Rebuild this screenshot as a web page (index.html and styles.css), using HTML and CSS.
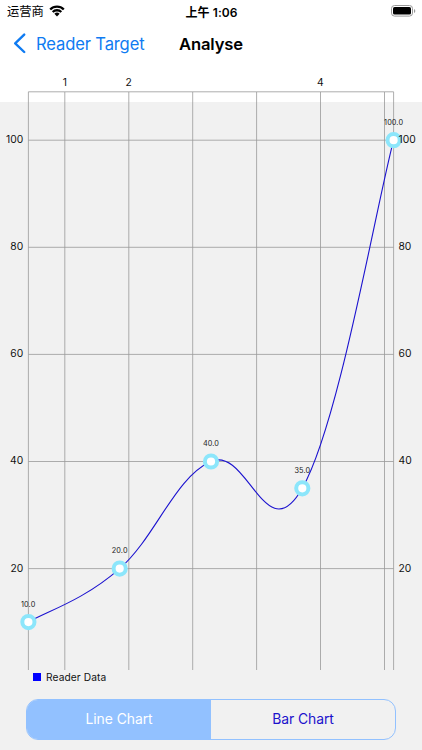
FILE: index.html
```
<!DOCTYPE html>
<html lang="zh">

<head>
    <meta charset="UTF-8">
    <meta name="viewport" content="width=device-width, initial-scale=1.0">
    <title>Analyse</title>
    <link rel="stylesheet" href="styles.css">
</head>

<body>
    <div id="container">
        <div class="status-bar">
            <div class="carrier">
                <span>运营商</span>
                <svg class="wifi" width="16" height="12" viewBox="0 0 16 12">
                    <path d="M1.2 4.5a9.6 9.6 0 0 1 13.6 0M3.7 7a6.1 6.1 0 0 1 8.6 0" />
                    <path class="dot" d="M8 11.4L5.4 8.8a3.7 3.7 0 0 1 5.2 0z" />
                </svg>
            </div>
            <div class="time">上午 1:06</div>
            <svg class="battery" width="25" height="12" viewBox="0 0 25 12">
                <rect class="shell" x=".5" y=".5" width="21" height="10.6" rx="3" />
                <rect x="2" y="2" width="18" height="7.6" rx="1.6" />
                <path class="cap" d="M23 4v4q1.3-.5 1.3-2T23 4z" />
            </svg>
        </div>

        <div class="nav-bar">
            <div class="back">
                <svg width="14" height="22" viewBox="0 0 14 22">
                    <path d="M11.2 1.6L2.2 10.3l9 8.7" />
                </svg>
                <span>Reader Target</span>
            </div>
            <h1>Analyse</h1>
        </div>

        <svg class="chart" width="422" height="602" viewBox="0 66 422 602">
            <!-- 网格 -->
            <path class="grid-x" d="M64.8 92V670M128.8 92V670M192.7 92V670M256.6 92V670M320.5 92V670M384.5 92V670" />
            <path class="grid-y" d="M28.4 140.2H393.6M28.4 247.3H393.6M28.4 354.4H393.6M28.4 461.5H393.6M28.4 568.6H393.6" />
            <path class="axis" d="M28.4 670V91.8H393.6V670" />

            <!-- 折线 -->
            <path class="line" d="M28.4 622.1C46.6 611.4 83.1 600.7 119.7 568.6C156.2 536.4 174.5 477.6 211 461.5C247.5 445.4 265.8 552.6 302.3 488.3C338.8 424 375.3 209.8 393.6 140.2" />
            <g class="points">
                <circle cx="28.4" cy="622.1" r="6.1" />
                <circle cx="119.7" cy="568.6" r="6.1" />
                <circle cx="211" cy="461.5" r="6.1" />
                <circle cx="302.3" cy="488.3" r="6.1" />
                <circle cx="393.6" cy="140.2" r="6.1" />
            </g>
            <g class="values">
                <text x="28.2" y="606.6">10.0</text>
                <text x="119.7" y="553.1">20.0</text>
                <text x="211" y="446">40.0</text>
                <text x="302.3" y="472.8">35.0</text>
                <text x="393.6" y="124.7">100.0</text>
            </g>

            <!-- 坐标文字 -->
            <g class="label">
                <text x="65" y="86">1</text>
                <text x="128.8" y="86">2</text>
                <text x="320.5" y="86">4</text>
            </g>
            <g class="label left">
                <text x="23.4" y="143">100</text>
                <text x="23.4" y="250.2">80</text>
                <text x="23.4" y="357.3">60</text>
                <text x="23.4" y="464.4">40</text>
                <text x="23.4" y="571.5">20</text>
            </g>
            <g class="label right">
                <text x="398.4" y="143">100</text>
                <text x="398.4" y="250.2">80</text>
                <text x="398.4" y="357.3">60</text>
                <text x="398.4" y="464.4">40</text>
                <text x="398.4" y="571.5">20</text>
            </g>
        </svg>

        <div class="legend">
            <i></i>
            <span>Reader Data</span>
        </div>

        <div class="tabs">
            <div class="tab active">Line Chart</div>
            <div class="tab">Bar Chart</div>
        </div>
    </div>
</body>

</html>
```

FILE: styles.css
```
* {
    margin: 0;
    padding: 0;
    box-sizing: border-box;
}

body {
    font-family: Inter, "Noto Sans CJK SC", sans-serif;
    color: #000;
}

#container {
    width: 422px;
    height: 750px;
    overflow: hidden;
    background: linear-gradient(#fff 102px, #f1f1f1 102px);
}

.status-bar {
    display: grid;
    grid-template-columns: 1fr auto 1fr;
    align-items: center;
    height: 22px;
    padding: 0 6px 0 7px;
}

.carrier {
    display: flex;
    align-items: center;
    gap: 5px;
    font-size: 12.3px;
}

.wifi {
    fill: none;
    stroke: #000;
    stroke-width: 2.3;
}

.wifi .dot {
    fill: #000;
    stroke: none;
}

.time {
    font-size: 12px;
    font-weight: 600;
    letter-spacing: 0.1px;
}

.battery {
    justify-self: end;
}

.battery .shell {
    fill: none;
    stroke: #999;
}

.battery .cap {
    fill: #999;
}

.nav-bar {
    display: grid;
    grid-template-columns: 1fr auto 1fr;
    align-items: center;
    height: 44px;
    padding: 0 13px;
}

.back {
    display: flex;
    align-items: center;
    gap: 9px;
    font-size: 16.6px;
    letter-spacing: -0.15px;
    color: #0f7bf2;
    white-space: nowrap;
}

.back path {
    fill: none;
    stroke: #0f7bf2;
    stroke-width: 2.4;
    stroke-linecap: round;
    stroke-linejoin: round;
}

.nav-bar h1 {
    font-size: 16.6px;
    font-weight: 600;
    letter-spacing: -0.15px;
}

.chart {
    display: block;
    overflow: visible;
}

.grid-x,
.grid-y,
.axis {
    fill: none;
    stroke: #999;
    stroke-width: 0.8;
}

.line {
    fill: none;
    stroke: #1b12cf;
    stroke-width: 1.1;
}

.points circle {
    fill: #fff;
    stroke: #8ce6fb;
    stroke-width: 4;
}

.values {
    font-size: 7.3px;
    fill: #222;
    text-anchor: middle;
    letter-spacing: 0.1px;
}

.label {
    font-size: 10.3px;
    fill: #111;
    text-anchor: middle;
    letter-spacing: 0.1px;
}

.label.left {
    text-anchor: end;
}

.label.right {
    text-anchor: start;
}

.legend {
    display: flex;
    align-items: center;
    gap: 5px;
    height: 17px;
    padding-left: 33px;
    font-size: 10.2px;
    letter-spacing: 0.1px;
    color: #111;
}

.legend i {
    width: 8px;
    height: 8px;
    background-color: #00f;
}

.tabs {
    display: flex;
    width: 370px;
    height: 41px;
    margin: 14px 0 0 26px;
    border: 1px solid #92c1ff;
    border-radius: 12px;
    overflow: hidden;
}

.tab {
    flex: 1;
    line-height: 39px;
    text-align: center;
    font-size: 13.9px;
    letter-spacing: -0.05px;
    color: #1c12cc;
}

.tab.active {
    background-color: #92c1ff;
    color: #fff;
}
```
